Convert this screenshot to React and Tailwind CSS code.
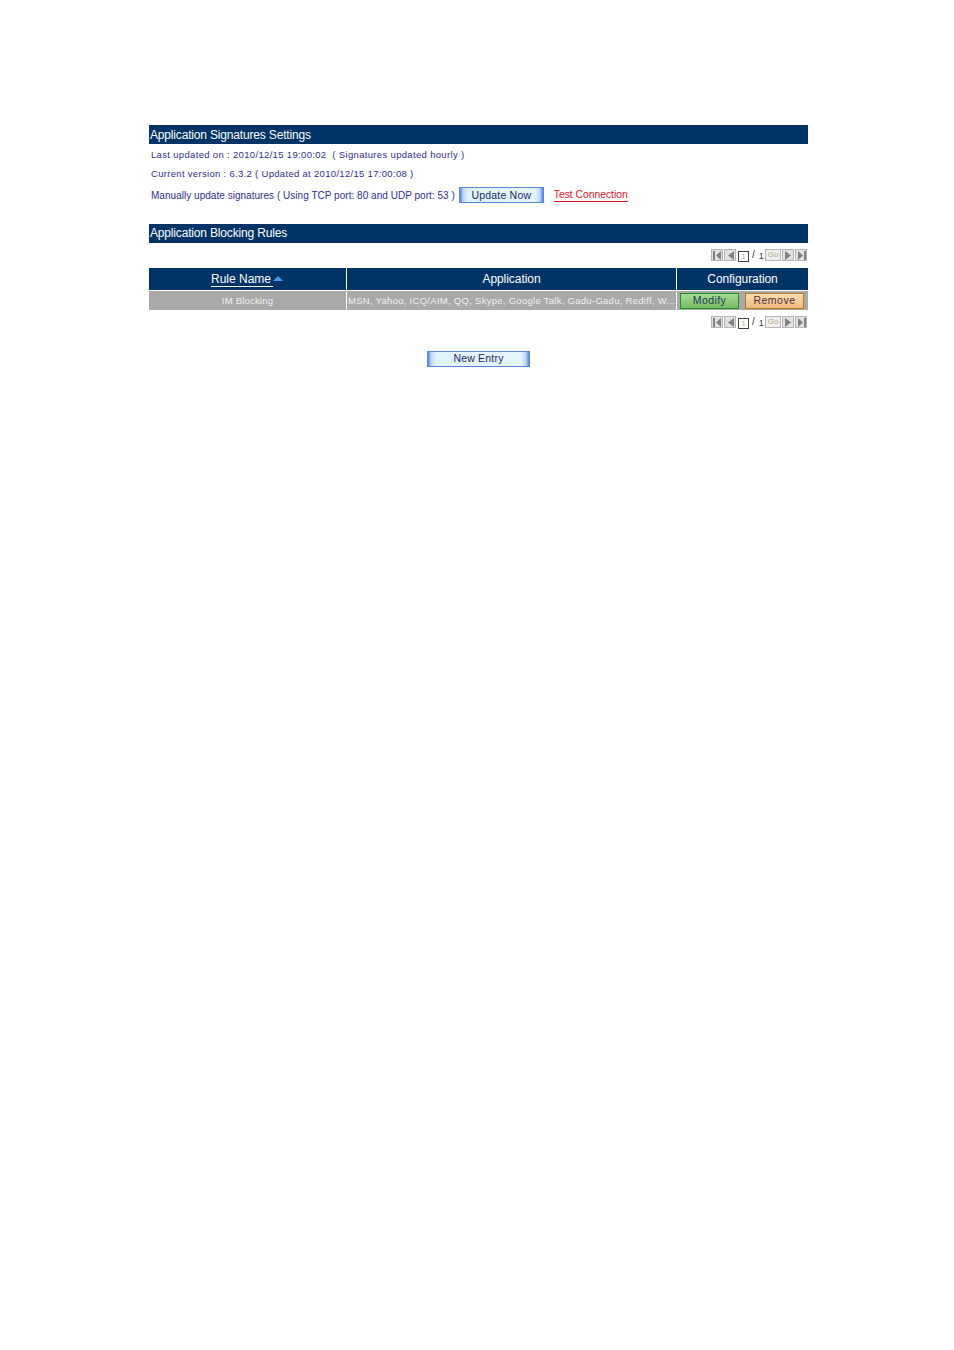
import React from 'react';

const font = "font-['Liberation_Sans',Arial,sans-serif]";

const PagerButton = ({ flip, bar, className }) => (
    <span className={`w-3 h-3 bg-[#e2e2e2] border border-[#b5b5b5] flex items-center justify-center ${className || ''}`}>
        <svg width="9" height="9" viewBox="0 0 9 9" className={flip ? 'rotate-180' : ''}>
            {bar && <rect x="0" y="0" width="2" height="9" fill="#808080" />}
            <path d={bar ? 'M8 0V9L3 4.5Z' : 'M8 0V9L2 4.5Z'} fill="#808080" />
        </svg>
    </span>
);

const Pager = () => (
    <div className="flex justify-end items-center h-3 pr-px">
        <PagerButton bar />
        <PagerButton className="ml-px" />
        <span className="ml-[2px] w-[11px] h-[11px] mt-[2px] border border-[#444] text-[8px] leading-[10px] text-center text-[#c9b48a]">1</span>
        <span className="w-4 flex shrink-0">
            <span className="ml-[3px] text-[10px] leading-3 text-[#2a2a80]">/</span>
            <span className="ml-[4px] text-[9px] leading-3 mt-px text-[#333]">1</span>
        </span>
        <span className="w-[16px] h-3 bg-[#eee] border border-[#b5b5b5] text-[8px] leading-[10px] text-center text-[#bba98a]">Go</span>
        <PagerButton flip className="ml-px" />
        <PagerButton flip bar className="ml-px" />
    </div>
);

const GlossyButton = ({ label, className }) => (
    <button className={`h-4 bg-[linear-gradient(90deg,#4f7fd6_0,#6f9ce6_2px,#b9d6fb_4px,#dff3ff_9px,#e6f6ff_calc(100%-9px),#b9d6fb_calc(100%-4px),#6f9ce6_calc(100%-2px),#4f7fd6_100%)] border-y border-[#5b86d8] text-[#1a2a5e] text-[10.5px] leading-[13px] tracking-[0.2px] ${className}`}>
        {label}
    </button>
);

const App = () => {
    return (
        <div className={`bg-white min-h-[1350px] pt-[125px] pl-[149px] ${font}`}>
            <div className="w-[659px]">
                <h2 className="h-[19px] bg-[#003366] text-white text-xs tracking-[-0.17px] leading-[20px] pl-px">Application Signatures Settings</h2>
                <p className="mt-[5px] pl-[2px] text-[9.5px] leading-3 tracking-[0.33px] text-[#2f2f8f]">
                    Last updated on : 2010/12/15 19:00:02 &nbsp;( Signatures updated hourly )
                </p>
                <p className="mt-[7px] pl-[2px] text-[9.5px] leading-3 tracking-[0.31px] text-[#2f2f8f]">
                    Current version : 6.3.2 ( Updated at 2010/12/15 17:00:08 )
                </p>
                <div className="mt-[7px] pl-[2px] flex items-center h-4">
                    <span className="mt-px text-[10px] leading-4 tracking-[0.03px] text-[#2f2f8f]">Manually update signatures ( Using TCP port: 80 and UDP port: 53 )</span>
                    <GlossyButton label="Update Now" className="ml-[4px] w-[85px]" />
                    <a className="ml-[10px] mt-px text-[10.3px] leading-3 text-[#e8101c] border-b border-[#e8101c]">Test Connection</a>
                </div>

                <h2 className="mt-[21px] h-[19px] bg-[#003366] text-white text-xs tracking-[-0.17px] leading-[19px] pl-px">Application Blocking Rules</h2>
                <div className="mt-[6px]"><Pager /></div>

                <div className="mt-[7px] grid grid-cols-[197px_329px_131px] gap-x-px gap-y-px">
                    <div className="h-[22px] bg-[#003366] text-white text-xs leading-[22px] flex justify-center items-center pr-[1px]">
                        <span className="border-b border-white leading-[14px] pr-[2px]">Rule Name</span>
                        <svg width="10" height="5" viewBox="0 0 10 5" className="mb-[1px]"><path d="M0 5L5 0L10 5Z" fill="#3d9bf0" /></svg>
                    </div>
                    <div className="h-[22px] bg-[#003366] text-white text-xs tracking-[-0.05px] leading-[22px] text-center">Application</div>
                    <div className="h-[22px] bg-[#003366] text-white text-xs tracking-[-0.08px] leading-[22px] text-center">Configuration</div>

                    <div className="h-[19px] bg-[#a9a9a9] text-[#f0f0f0] text-[9.5px] leading-[19px] tracking-[0.2px] text-center">IM Blocking</div>
                    <div className="h-[19px] bg-[#a9a9a9] text-[#f0f0f0] text-[9.5px] leading-[19px] tracking-[0.28px] pl-px whitespace-nowrap overflow-hidden">MSN, Yahoo, ICQ/AIM, QQ, Skype, Google Talk, Gadu-Gadu, Rediff, W...</div>
                    <div className="h-[19px] bg-[#a9a9a9] flex items-center pl-[3px] gap-[6px]">
                        <button className="w-[59px] h-4 pb-px bg-gradient-to-b from-[#a8dc90] to-[#74bc64] border border-[#1f8f2f] text-[#1c3a5e] text-[10.5px] leading-[13px] tracking-[0.4px]">Modify</button>
                        <button className="w-[59px] h-4 pb-px bg-gradient-to-b from-[#fbdcb0] to-[#eeb877] border border-[#b97a28] text-[#4a2f3e] text-[10.5px] leading-[13px] tracking-[0.5px]">Remove</button>
                    </div>
                </div>

                <div className="mt-[6px]"><Pager /></div>

                <div className="mt-[23px] flex pl-[278px]">
                    <GlossyButton label="New Entry" className="w-[103px] pb-px" />
                </div>
            </div>
        </div>
    );
};

export default App;
